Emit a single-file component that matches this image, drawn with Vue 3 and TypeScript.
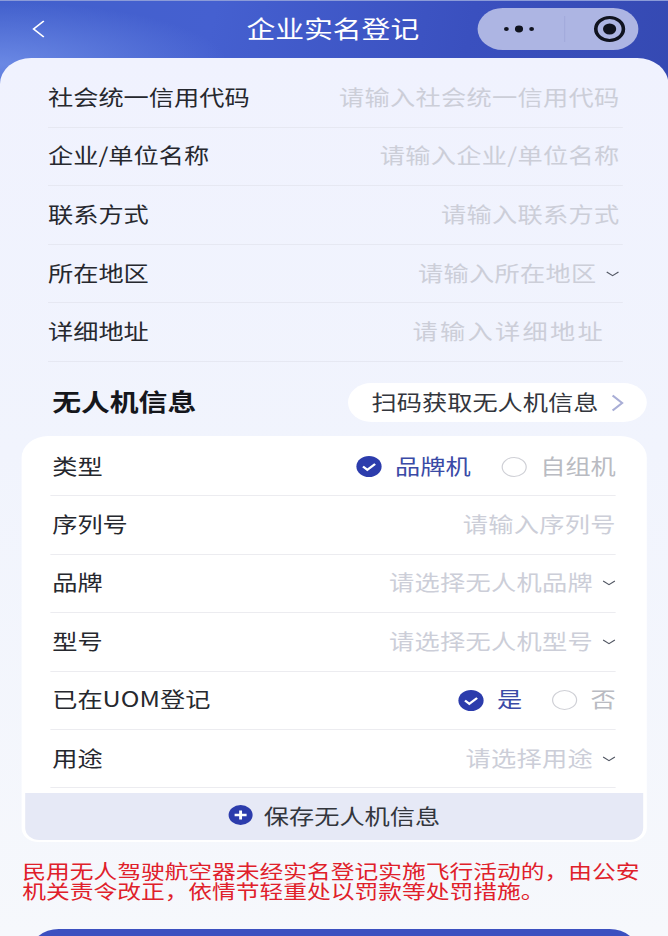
<template>
  <div class="page">
    <div class="nav">
      <svg class="back" width="12" height="20" viewBox="0 0 12 20"><path d="M10.500 2 2 10l8.500 8" fill="none" stroke="#fff" stroke-width="1.500" /></svg>
      <div class="nav-title">企业实名登记</div>
      <div class="capsule">
        <svg class="dots" width="30" height="10" viewBox="0 0 30 10"><circle cx="4" cy="5" r="2" /><circle cx="14.500" cy="5" r="3.400" /><circle cx="25" cy="5" r="2" /></svg>
        <span class="capsule-line"></span>
        <svg class="target" width="28" height="28" viewBox="0 0 28 28"><circle cx="14" cy="14" r="11.500" fill="none" stroke="#10131f" stroke-width="3" /><circle cx="14" cy="14" r="5.500" fill="#10131f" /></svg>
      </div>
    </div>

    <div class="sheet">
      <div v-for="row in companyRows" :key="row.label" class="row company">
        <span class="label">{{ row.label }}</span>
        <span class="ph" :class="{ inset: row.inset }">{{ row.hint }}</span>
        <svg v-if="row.arrow" class="chev" width="11" height="6" viewBox="0 0 11 6"><path d="M.6 1 5.500 4.600 10.400 1" fill="none" stroke="#555a66" stroke-width="1" /></svg>
      </div>

      <div class="section">
        <div class="section-title">无人机信息</div>
        <div class="scan">
          <span>扫码获取无人机信息</span>
          <svg width="11" height="18" viewBox="0 0 11 18"><path d="M1.500 1.500 9.500 9l-8 7.500" fill="none" stroke="#a9aed6" stroke-width="1.800" /></svg>
        </div>
      </div>

      <div class="card">
        <div class="row drone">
          <span class="label">类型</span>
          <span class="radios">
            <svg class="tick" width="23" height="21" viewBox="0 0 23 21"><circle cx="11.500" cy="10.500" r="10.500" fill="#2c3cac" /><path d="M6.500 10.500l3.600 3.300 6.500-5.800" fill="none" stroke="#fff" stroke-width="2" /></svg>
            <span class="on">品牌机</span>
            <i class="ring first"></i>
            <span class="off">自组机</span>
          </span>
        </div>
        <div class="row drone">
          <span class="label">序列号</span>
          <span class="ph">请输入序列号</span>
        </div>
        <div class="row drone">
          <span class="label">品牌</span>
          <span class="ph">请选择无人机品牌</span>
          <svg class="chev" width="11" height="6" viewBox="0 0 11 6"><path d="M.6 1 5.500 4.600 10.400 1" fill="none" stroke="#555a66" stroke-width="1" /></svg>
        </div>
        <div class="row drone">
          <span class="label">型号</span>
          <span class="ph">请选择无人机型号</span>
          <svg class="chev" width="11" height="6" viewBox="0 0 11 6"><path d="M.6 1 5.500 4.600 10.400 1" fill="none" stroke="#555a66" stroke-width="1" /></svg>
        </div>
        <div class="row drone">
          <span class="label">已在UOM登记</span>
          <span class="radios">
            <svg class="tick" width="23" height="21" viewBox="0 0 23 21"><circle cx="11.500" cy="10.500" r="10.500" fill="#2c3cac" /><path d="M6.500 10.500l3.600 3.300 6.500-5.800" fill="none" stroke="#fff" stroke-width="2" /></svg>
            <span class="on">是</span>
            <i class="ring second"></i>
            <span class="off">否</span>
          </span>
        </div>
        <div class="row drone">
          <span class="label">用途</span>
          <span class="ph">请选择用途</span>
          <svg class="chev" width="11" height="6" viewBox="0 0 11 6"><path d="M.6 1 5.500 4.600 10.400 1" fill="none" stroke="#555a66" stroke-width="1" /></svg>
        </div>
        <div class="save">
          <svg width="21" height="20" viewBox="0 0 21 20"><circle cx="10.500" cy="10" r="10" fill="#2c3cac" /><path d="M5.500 10h10M10.500 5.500v9" stroke="#fff" stroke-width="2.400" /></svg>
          <span>保存无人机信息</span>
        </div>
      </div>

      <p class="warn">民用无人驾驶航空器未经实名登记实施飞行活动的，由公安机关责令改正，依情节轻重处以罚款等处罚措施。</p>

      <div class="submit"></div>
    </div>
  </div>
</template>

<script setup lang="ts">
// the reference is stretched wider than tall, so the page is laid out at 668 / 1.2
const companyRows = [
  { label: "社会统一信用代码", hint: "请输入社会统一信用代码" },
  { label: "企业/单位名称", hint: "请输入企业/单位名称" },
  { label: "联系方式", hint: "请输入联系方式" },
  { label: "所在地区", hint: "请输入所在地区", arrow: true },
  { label: "详细地址", hint: "请输入详细地址", inset: true },
];
</script>

<style>
html,
body {
  margin: 0;
  overflow: hidden;
}
</style>

<style scoped>
.page {
  width: 556.67px;
  height: 936px;
  overflow: hidden;
  transform: scaleX(1.2);
  transform-origin: left top;
  font-family: "Noto Sans CJK SC", "Noto Sans", sans-serif;
  background:
    radial-gradient(ellipse 190px 62px at 0 64px, #6a88e4, rgba(106, 136, 228, 0)),
    linear-gradient(100deg, #4260cc 0, #4560d0 25%, #3a50bf 55%, #3144a8 100%);
}
.nav {
  height: 58px;
  position: relative;
  display: flex;
  align-items: center;
  justify-content: center;
  border-top: 1px solid #8b9bd8;
  box-sizing: border-box;
}
.back {
  position: absolute;
  left: 26px;
  top: 18px;
}
.nav-title {
  color: #fff;
  font-size: 24px;
  line-height: 28px;
  margin-top: -3px;
  margin-right: 2px;
}
.capsule {
  position: absolute;
  left: 397.5px;
  top: 7px;
  width: 134px;
  height: 42px;
  border-radius: 21px;
  background: #adb5e3;
  display: flex;
  align-items: center;
}
.dots {
  margin-left: 20px;
  fill: #10131f;
}
.capsule-line {
  width: 1px;
  height: 26px;
  margin-left: 22.5px;
  background: #a3abdc;
}
.target {
  margin-left: 22.5px;
}
.sheet {
  height: 878px;
  border-radius: 26px 26px 0 0;
  background: linear-gradient(180deg, #f0f2fe 0, #f1f4fd 45%, #f6f8fc 100%);
  padding-top: 11px;
  box-sizing: border-box;
}
.row {
  display: flex;
  align-items: center;
  box-sizing: border-box;
  font-size: 21px;
  border-bottom: 1px solid #e6e8f2;
}
.company {
  height: 58.6px;
  margin: 0 38px 0 40px;
  padding-right: 2.5px;
  padding-bottom: 4px;
}
.label {
  color: #26282e;
  margin-right: auto;
}
.ph {
  color: #ccced8;
  letter-spacing: 0.25px;
}
.inset {
  margin-right: 12px;
  letter-spacing: 1.9px;
}
.chev {
  margin-left: 8px;
  margin-top: 4px;
  flex: none;
}
.section {
  height: 70px;
  padding: 4px 18px 0 43.5px;
  display: flex;
  align-items: center;
  justify-content: space-between;
}
.section-title {
  font-size: 24px;
  font-weight: 700;
  color: #15171c;
}
.scan {
  width: 249px;
  height: 39px;
  margin-top: 4px;
  box-sizing: border-box;
  padding-left: 20px;
  display: flex;
  align-items: center;
  gap: 10px;
  border-radius: 20px;
  background: #fff;
  font-size: 21px;
  color: #33363d;
}
.scan span {
  margin-top: -4px;
}
.card {
  margin: 0 18px;
  height: 406px;
  box-sizing: border-box;
  background: #fff;
  border-radius: 22px 22px 14px 14px;
  padding: 2px 3px 2px;
}
.drone {
  height: 58.4px;
  margin: 0 22.5px 0 20.5px;
  padding-bottom: 4px;
  justify-content: flex-end;
  border-bottom-color: #ececf0;
}
.drone .label {
  padding-left: 2px;
}
.radios {
  display: flex;
  align-items: center;
}
.tick {
  margin-right: 10px;
  margin-top: 4px;
}
.on {
  color: #3a4aa6;
}
.off {
  color: #b9bbc2;
}
.ring {
  width: 21px;
  height: 20px;
  margin-top: 4px;
  box-sizing: border-box;
  border: 1px solid #cfd0d6;
  border-radius: 50%;
}
.first {
  margin-left: 26px;
  margin-right: 11px;
}
.second {
  margin-left: 25px;
  margin-right: 11px;
}
.save {
  margin-top: 5px;
  height: 47px;
  padding-bottom: 4px;
  box-sizing: border-box;
  border-radius: 0 0 12px 12px;
  background: #e6e9f6;
  display: flex;
  align-items: center;
  justify-content: center;
  gap: 9px;
  font-size: 21px;
  color: #33363d;
}
.warn {
  margin: 19px 22px 0 18.5px;
  font-size: 19.8px;
  line-height: 20.5px;
  color: #e0202a;
}
.submit {
  margin: 27px 25px 0;
  height: 60px;
  border-radius: 24px 24px 0 0;
  background: #3c50c0;
}
</style>
